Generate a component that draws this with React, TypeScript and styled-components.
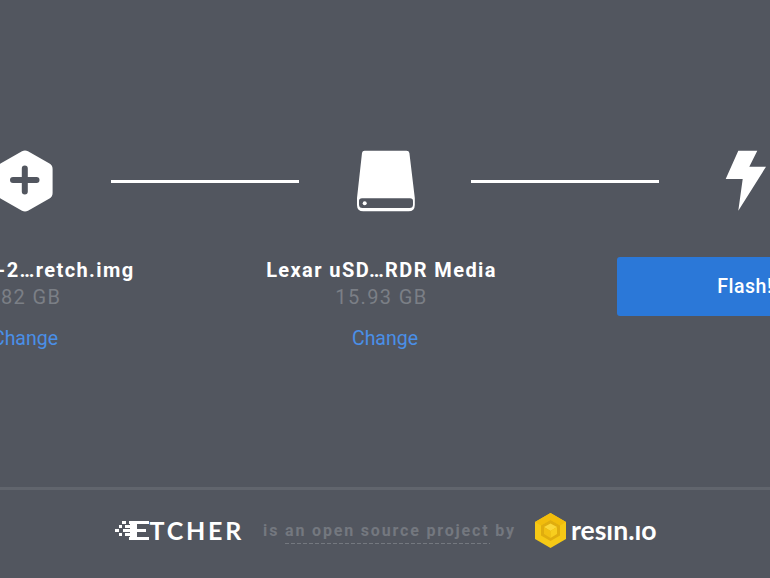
import React from 'react';
import styled, {createGlobalStyle} from "styled-components";

const GlobalStyle = createGlobalStyle`
    html, body {
        margin: 0;
        padding: 0;
        height: 100%;
        overflow: hidden;
        background: #52565f;
        font-family: Roboto, "Liberation Sans", sans-serif;
    }
    #root {
        height: 100%;
    }
`

function ImageIcon() {
    return (
        <StepIcon width="56" height="62" viewBox="0 0 56 62">
            <path
                fillRule="evenodd"
                fill="#fff"
                d="M25 1.2 Q28 -0.4 31 1.2 L52.5 13.6 Q55.6 15.4 55.6 19 L55.6 43 Q55.6 46.6 52.5 48.4 L31 60.8 Q28 62.4 25 60.8 L3.5 48.4 Q0.4 46.6 0.4 43 L0.4 19 Q0.4 15.4 3.5 13.6 Z
                M24.8 18.5 Q24.8 15.5 27.8 15.5 Q30.8 15.5 30.8 18.5 L30.8 27 L39.5 27 Q42.5 27 42.5 30 Q42.5 33 39.5 33 L30.8 33 L30.8 41.5 Q30.8 44.5 27.8 44.5 Q24.8 44.5 24.8 41.5 L24.8 33 L16 33 Q13 33 13 30 Q13 27 16 27 L24.8 27 Z"
            />
        </StepIcon>
    );
}

function DriveIcon() {
    return (
        <StepIcon width="60" height="62" viewBox="0 0 60 62">
            <path
                fill="#fff"
                fillRule="evenodd"
                d="M9.5 0.7 L51.5 0.7 Q54 0.7 54.4 3 L59.8 48 L59.8 55 Q59.8 61.3 53.5 61.3 L8.3 61.3 Q2 61.3 2 55 L2 48 L7 3 Q7.4 0.7 9.5 0.7 Z
                M7 48.3 Q4 48.3 4 51 L4 54.5 Q4 58 7.5 58 L54.5 58 Q58 58 58 54.5 L58 51 Q58 48.3 55 48.3 Z"
            />
            <circle cx="9.7" cy="53.3" r="2" fill="#fff" />
        </StepIcon>
    );
}

function FlashIcon() {
    return (
        <StepIcon width="42" height="62" viewBox="0 0 42 62">
            <path fill="#fff" d="M14.3 0.7 L33.3 0.7 L25.3 16.7 L42 16.7 L14.3 60.7 L18.7 29 L1.7 29 Z" />
        </StepIcon>
    );
}

function EtcherMark() {
    const bars = [
        [7, 0, 4], [14, 0, 20],
        [4, 4, 3], [10, 4, 12],
        [0, 8, 4], [8, 8, 23],
        [4, 12, 3], [10, 12, 12],
        [14, 16, 20],
    ];
    return (
        <svg width="34" height="19" viewBox="0 0 34 19">
            {bars.map(([x, y, w]) => (
                <rect key={`${x}-${y}`} x={x} y={y} width={w} height="3" fill="#fff" />
            ))}
            <rect x="15" y="0" width="7" height="19" fill="#fff" />
        </svg>
    );
}

function ResinMark() {
    return (
        <svg width="31" height="35" viewBox="0 0 31 35">
            <polygon points="15.5,0 31,9 31,26 15.5,35 0,26 0,9" fill="#f6c915" />
            <polygon points="15.5,0 31,9 25,12.5 15.5,7 6,12.5 0,9" fill="#f2bd0c" />
            <polygon points="6,12.5 15.5,7 25,12.5 25,22.5 15.5,28 6,22.5" fill="#e0ad0e" />
            <polygon points="9,14 15.5,10.5 22,14 15.5,18" fill="#fbd83a" />
            <polygon points="9,14 15.5,18 15.5,25 9,21" fill="#f2c012" />
            <polygon points="22,14 15.5,18 15.5,25 22,21" fill="#f8ce1e" />
        </svg>
    );
}

function App() {
    return (
        <Page>
            <GlobalStyle />
            <Main>
                <Step>
                    <ImageIcon />
                    <Title>raspbian-2…retch.img</Title>
                    <Size>1.82 GB</Size>
                    <ChangeLink>Change</ChangeLink>
                </Step>
                <Connector />
                <Step>
                    <DriveIcon />
                    <Title>Lexar uSD…RDR Media</Title>
                    <Size>15.93 GB</Size>
                    <ChangeLink>Change</ChangeLink>
                </Step>
                <Connector />
                <Step>
                    <FlashIcon />
                    <FlashButton>Flash!</FlashButton>
                </Step>
            </Main>
            <Footer>
                <EtcherLogo>
                    <EtcherMark />
                    <EtcherName>TCHER</EtcherName>
                </EtcherLogo>
                <FooterText>is <Dashed>an open source project</Dashed> by</FooterText>
                <ResinLogo>
                    <ResinMark />
                    <ResinName>resın.ıo</ResinName>
                </ResinLogo>
            </Footer>
        </Page>
    );
}

const Page = styled.div`
    height: 578px;
    width: 770px;
    overflow: hidden;
    display: flex;
    flex-direction: column;
    background: #52565f;
`
const Main = styled.div`
    height: 487px;
    flex: none;
    padding-top: 150px;
    box-sizing: border-box;
    display: flex;
    justify-content: center;
    align-items: flex-start;
`
const Step = styled.div`
    flex: 0 0 170px;
    min-width: 0;
    display: flex;
    flex-direction: column;
    align-items: center;
`
const StepIcon = styled.svg`
    display: block;
    height: 62px;
    flex: none;
`
const Connector = styled.div`
    flex: 0 0 188px;
    margin: 30px 1px 0 1px;
    height: 3px;
    background: #fff;
`
const Title = styled.div`
    margin-top: 46px;
    padding-right: 7px;
    font-size: 20px;
    line-height: 24px;
    font-weight: 700;
    letter-spacing: 1.4px;
    color: #fff;
    white-space: nowrap;
`
const Size = styled.div`
    margin-top: 4px;
    padding-right: 7px;
    font-size: 20px;
    line-height: 22px;
    letter-spacing: 1.4px;
    color: #7b7f86;
    white-space: nowrap;
`
const ChangeLink = styled.a`
    margin-top: 20px;
    font-size: 19.5px;
    line-height: 22px;
    color: #4a8fe7;
    cursor: pointer;
`
const FlashButton = styled.button`
    margin-top: 45px;
    flex: none;
    width: 256px;
    height: 59px;
    border: 0;
    border-radius: 3px;
    background: #2b78d8;
    color: #fff;
    font-family: inherit;
    font-size: 19.5px;
    font-weight: 500;
    letter-spacing: 0.5px;
`
const Footer = styled.div`
    flex: 1;
    border-top: 3px solid #61656d;
    display: flex;
    align-items: center;
    justify-content: center;
    padding: 0 0 8px 2px;
`
const EtcherLogo = styled.div`
    display: flex;
    align-items: center;
`
const EtcherName = styled.span`
    font-family: Lato, sans-serif;
    font-size: 25px;
    font-weight: 700;
    letter-spacing: 2.8px;
    color: #fff;
`
const FooterText = styled.div`
    margin: 0 19px;
    font-size: 16px;
    font-weight: 700;
    letter-spacing: 1.83px;
    color: #74787f;
    white-space: nowrap;
`
const Dashed = styled.span`
    padding-bottom: 4px;
    background-image: repeating-linear-gradient(to right, #74787f 0, #74787f 4px, transparent 4px, transparent 6px);
    background-size: 100% 1px;
    background-position: bottom left;
    background-repeat: no-repeat;
`
const ResinLogo = styled.div`
    display: flex;
    align-items: center;
    gap: 5px;
`
const ResinName = styled.span`
    font-family: Lato, sans-serif;
    font-size: 26.6px;
    font-weight: 700;
    color: #fff;
`
export default App;
